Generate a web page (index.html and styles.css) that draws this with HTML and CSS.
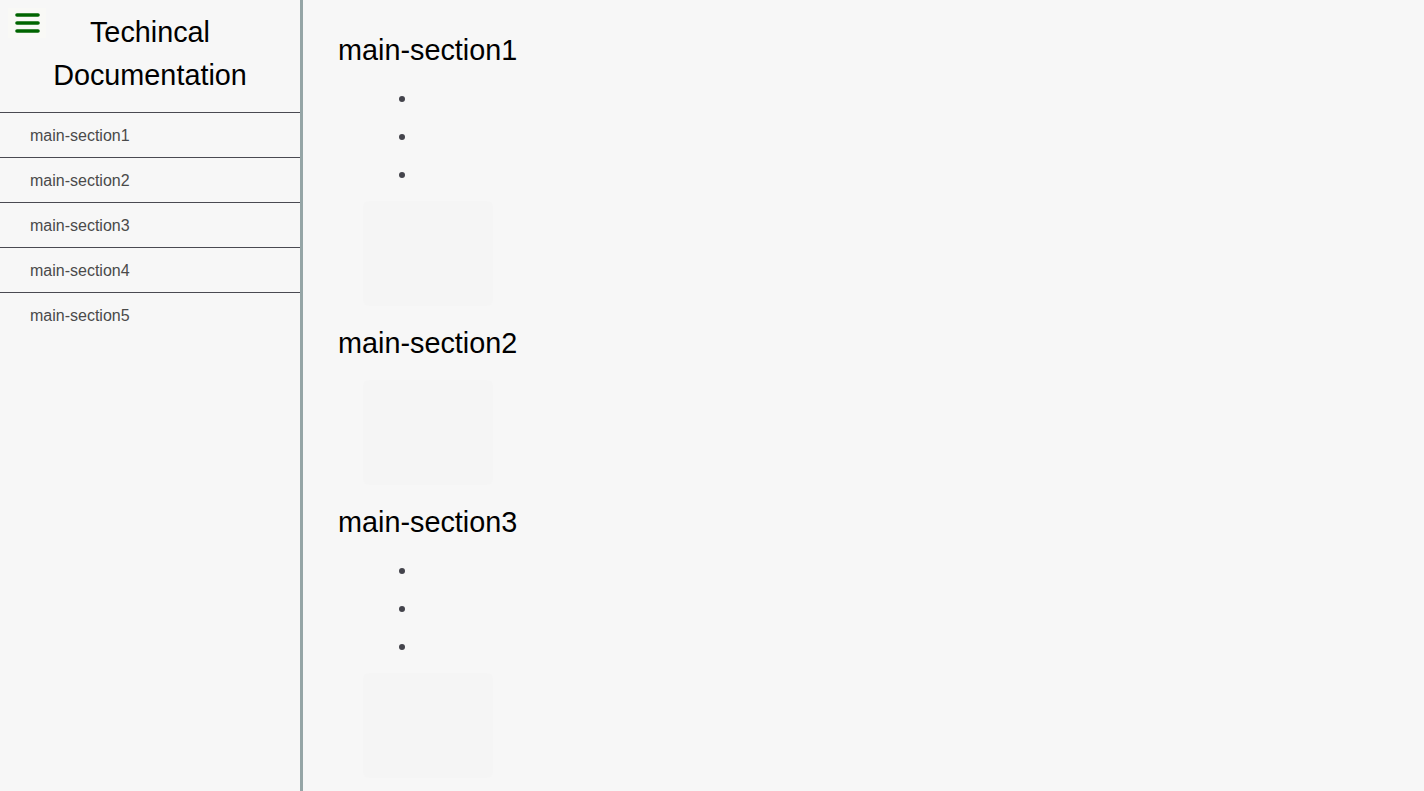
FILE: index.html
```html
<!DOCTYPE html>
<html lang="en">
<head>
<meta charset="utf-8">
<title>Techincal Documentation</title>
<link rel="stylesheet" href="styles.css">
</head>
<body>
<nav class="navbar" id="navbar">
  <header class="nav-header">
    <button class="menu-btn" aria-label="menu">
      <svg width="25" height="20" viewBox="0 0 25 20" aria-hidden="true">
        <g stroke="#006400" stroke-width="3.6" stroke-linecap="round">
          <line x1="2" y1="2" x2="23" y2="2"/>
          <line x1="2" y1="10" x2="23" y2="10"/>
          <line x1="2" y1="18" x2="23" y2="18"/>
        </g>
      </svg>
    </button>
    <h1 class="nav-title">Techincal Documentation</h1>
  </header>
  <ul class="nav-list">
    <li><a class="nav-link" href="#main-section1">main-section1</a></li>
    <li><a class="nav-link" href="#main-section2">main-section2</a></li>
    <li><a class="nav-link" href="#main-section3">main-section3</a></li>
    <li><a class="nav-link" href="#main-section4">main-section4</a></li>
    <li><a class="nav-link" href="#main-section5">main-section5</a></li>
  </ul>
</nav>
<main class="main-doc" id="main-doc">
  <section class="main-section" id="main-section1">
    <header class="section-title">main-section1</header>
    <ul class="bullets">
      <li></li>
      <li></li>
      <li></li>
    </ul>
    <div class="code-box"></div>
  </section>
  <section class="main-section" id="main-section2">
    <header class="section-title">main-section2</header>
    <div class="code-box"></div>
  </section>
  <section class="main-section" id="main-section3">
    <header class="section-title">main-section3</header>
    <ul class="bullets">
      <li></li>
      <li></li>
      <li></li>
    </ul>
    <div class="code-box"></div>
  </section>
</main>
</body>
</html>
```
FILE: styles.css
```css
* {
  box-sizing: border-box;
}

html, body {
  margin: 0;
  padding: 0;
  height: 100%;
}

body {
  background: #f7f7f7;
  font-family: "Liberation Sans", Arial, sans-serif;
  color: #000;
  display: flex;
  overflow: hidden;
}

.navbar {
  width: 303px;
  flex: 0 0 303px;
  height: 100vh;
  border-right: 3px solid #95a5a6;
  background: #f7f7f7;
}

.nav-header {
  position: relative;
  padding: 11px 0 15px;
  border-bottom: 1px solid #4a4a52;
}

.menu-btn {
  position: absolute;
  left: 8px;
  top: 8px;
  width: 38px;
  height: 30px;
  padding: 0;
  border: none;
  background: #f9f9f6;
  display: flex;
  align-items: center;
  justify-content: center;
}

.nav-title {
  margin: 0;
  font-size: 28.8px;
  font-weight: normal;
  line-height: 43px;
  text-align: center;
}

.nav-list {
  list-style: none;
  margin: 0;
  padding: 0;
}

.nav-list li {
  border-bottom: 1px solid #4a4a52;
}

.nav-list li:last-child {
  border-bottom: none;
}

.nav-link {
  display: flex;
  align-items: center;
  height: 44px;
  padding: 1px 30px 0;
  font-size: 16px;
  color: #4a4a4a;
  text-decoration: none;
}

.main-doc {
  flex: 1;
  padding: 34px 35px 0;
}

.section-title {
  font-size: 28.8px;
  line-height: 33px;
}

.main-section + .main-section {
  margin-top: 21px;
}

.bullets {
  margin: 12px 0 8px;
  padding-left: 80px;
  color: #44444c;
  font-size: 21px;
}

.bullets li {
  height: 38px;
  line-height: 38px;
}

.code-box {
  margin-left: 25px;
  width: 130px;
  height: 105px;
  border-radius: 6px;
  background: #f5f5f5;
}

.section-title + .code-box {
  margin-top: 20px;
}
```
